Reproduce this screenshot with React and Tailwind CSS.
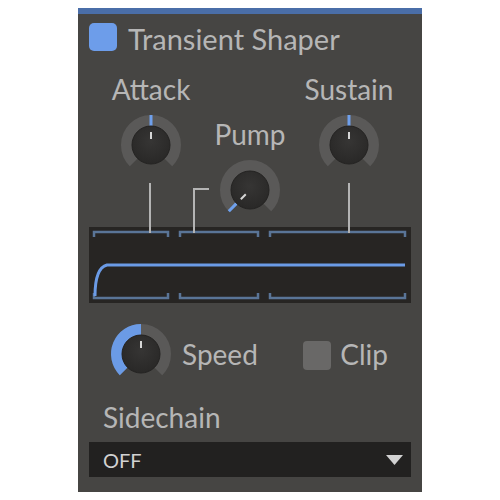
import React from 'react';

const FONT = { fontFamily: 'Lato, "Open Sans", sans-serif' };

// point on a circle, angle in degrees from top, clockwise
const pt = (r, a, c = 32) => {
  const t = (a * Math.PI) / 180;
  return [c + r * Math.sin(t), c - r * Math.cos(t)];
};

const arc = (r, a0, a1) => {
  const [x0, y0] = pt(r, a0);
  const [x1, y1] = pt(r, a1);
  const large = a1 - a0 > 180 ? 1 : 0;
  return `M${x0} ${y0} A${r} ${r} 0 ${large} 1 ${x1} ${y1}`;
};

const Knob = ({ id, value, fill }) => {
  // value angle, -135 .. 135
  const [tx0, ty0] = pt(19, value);
  const [tx1, ty1] = pt(30, value);
  const [px0, py0] = pt(6, value);
  const [px1, py1] = pt(13, value);
  return (
    <svg width="64" height="64" viewBox="0 0 64 64">
      <defs>
        <radialGradient id={`kg-${id}`} cx="50%" cy="40%" r="60%">
          <stop offset="0%" stopColor="#363534" />
          <stop offset="100%" stopColor="#292827" />
        </radialGradient>
      </defs>
      <path d={arc(24.5, -135, 135)} stroke="#5a5958" strokeWidth="11" fill="none" />
      {fill ? (
        <path d={arc(24.5, -135, value)} stroke="#6b9be6" strokeWidth="11" fill="none" />
      ) : (
        <line x1={tx0} y1={ty0} x2={tx1} y2={ty1} stroke="#6fa0ec" strokeWidth="3" />
      )}
      <circle cx="32" cy="32" r="19" fill={`url(#kg-${id})`} stroke="#242322" strokeWidth="1" />
      <line x1={px0} y1={py0} x2={px1} y2={py1} stroke="#d6d6d6" strokeWidth="2" />
    </svg>
  );
};

const Bracket = ({ x0, x1 }) => (
  <g stroke="#5a7597" strokeWidth="2.5" fill="none">
    <path d={`M${x0} 10 V5 H${x1} V10`} />
    <path d={`M${x0} 66 V71 H${x1} V66`} />
  </g>
);

export default function App() {
  return (
    <div className="w-full h-[500px] bg-white pt-[8px] pl-[78px]" style={FONT}>
      <div className="w-[344px] h-[484px] bg-[#464543] flex flex-col text-[#b6b6b6]">
        <div className="h-[6px] bg-[#4a6ea8]" />

        <div className="mt-[9px] flex items-center gap-[11px] px-[11px] h-[28px]">
          <div className="w-[28px] h-[28px] rounded-[5px] bg-[#6d9dea]" />
          <span className="text-[29px] leading-[28px] mt-[3px]">Transient Shaper</span>
        </div>

        <div className="relative h-[176px]">
          <div className="flex justify-center pt-[24px]">
            <div className="w-[99px] flex flex-col items-center">
              <span className="text-[28px] leading-[28px]">Attack</span>
              <div className="mt-[10px]"><Knob id="a" value={0} /></div>
            </div>
            <div className="w-[99px] flex flex-col items-center mt-[45px]">
              <span className="text-[28px] leading-[28px]">Pump</span>
              <div className="mt-[10px]"><Knob id="p" value={-135} /></div>
            </div>
            <div className="w-[99px] flex flex-col items-center">
              <span className="text-[28px] leading-[28px]">Sustain</span>
              <div className="mt-[10px]"><Knob id="s" value={0} /></div>
            </div>
          </div>
          <svg className="absolute left-0 top-0 z-10" width="344" height="182" viewBox="0 0 344 182">
            <g stroke="#b4b4b4" strokeWidth="2" fill="none">
              <path d="M72 132 V182" />
              <path d="M271 132 V182" />
              <path d="M131 138 H116 V182" />
            </g>
          </svg>
        </div>

        <div className="mx-[11px] h-[76px] bg-[#272523]">
          <svg width="322" height="76" viewBox="0 0 322 76">
            <Bracket x0={5} x1={79} />
            <Bracket x0={91} x1={169} />
            <Bracket x0={181} x1={316} />
            <path d="M6 69 C6 52 10 40 18 38 L316 38" stroke="#6b9be6" strokeWidth="3" fill="none" />
          </svg>
        </div>

        <div className="mt-[19px] flex items-center pl-[31px] pr-[34px]">
          <Knob id="sp" value={0} fill />
          <span className="ml-[9px] text-[28px] leading-[28px]">Speed</span>
          <div className="ml-auto flex items-center gap-[9px]">
            <div className="w-[28px] h-[29px] rounded-[4px] bg-[#696867] mt-[3px]" />
            <span className="text-[28px] leading-[28px]">Clip</span>
          </div>
        </div>

        <span className="mt-[17px] ml-[25px] text-[28px] leading-[28px]">Sidechain</span>

        <div className="mt-[11px] mx-[11px] h-[35px] bg-[#222120] flex items-center pl-[14px] pr-[8px]">
          <span className="text-[20px] leading-[20px] text-[#d2d2d2]">OFF</span>
          <svg className="ml-auto" width="17" height="10" viewBox="0 0 17 10">
            <path d="M0 0 H17 L8.5 10 Z" fill="#d2d2d2" />
          </svg>
        </div>
      </div>
    </div>
  );
}
